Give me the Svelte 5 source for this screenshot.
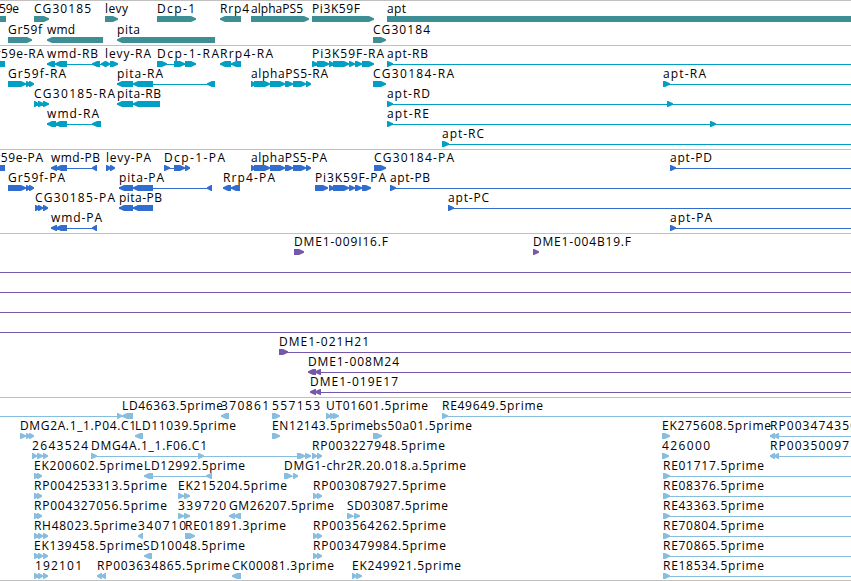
<script>
    const END = 860;

    // feature: [label, text start, text end, direction, exon edges (start, end, start, end...), intron line]
    const psi = [251, 255, 254, 270, 270, 285, 285, 293, 293, 306, 306, 311];
    const triple = [34, 39, 38, 43, 43, 48];

    const tracks = [
        {
            name: 'genes', height: 45, pitch: 21,
            rows: [
                [
                    ['Gr59e', -14, 19, '|', [-20, 6]],
                    ['CG30185', 34, 91, '>', [34, 49]],
                    ['levy', 105, 128, '>', [105, 118]],
                    ['Dcp-1', 157, 195, '>', [157, 196]],
                    ['Rrp4', 220, 249, '<', [220, 241]],
                    ['alphaPS5', 251, 303, '>', [251, 309]],
                    ['Pi3K59F', 312, 360, '>', [312, 374]],
                    ['apt', 387, 406, '|', [387, END]],
                ],
                [
                    ['Gr59f', 8, 42, '>', [8, 32]],
                    ['wmd', 47, 75, '<', [47, 103]],
                    ['pita', 117, 140, '<', [117, 215]],
                    ['CG30184', 373, 430, '>', [373, 386]],
                ],
            ],
        },
        {
            name: 'transcripts', height: 104, pitch: 20,
            rows: [
                [
                    ['Gr59e-RA', -14, 44, '|', [-20, 5]],
                    ['wmd-RB', 47, 98, '<', [47, 55, 55, 67, 92, 100, 101, 106], [47, 105]],
                    ['levy-RA', 105, 151, '>', [105, 110, 110, 118]],
                    ['Dcp-1-RA', 157, 219, '>', [157, 167, 174, 185, 185, 196], [157, 196]],
                    ['Rrp4-RA', 220, 273, '<', [220, 231, 231, 241]],
                    ['Pi3K59F-RA', 312, 384, '>', [312, 318, 317, 329, 329, 334, 333, 349, 349, 355, 355, 362, 362, 374]],
                    ['apt-RB', 387, 428, '>', [387, 393], [387, END]],
                ],
                [
                    ['Gr59f-RA', 8, 66, '>', [8, 26, 26, 30, 29, 34]],
                    ['pita-RA', 117, 163, '<', [117, 133, 133, 153, 207, 215], [117, 215]],
                    ['alphaPS5-RA', 251, 328, '>', psi],
                    ['CG30184-RA', 373, 454, '>', [373, 386]],
                    ['apt-RA', 663, 706, '>', [663, 670], [663, END]],
                ],
                [
                    ['CG30185-RA', 34, 115, '>', [34, 39, 38, 44, 43, 49]],
                    ['pita-RB', 117, 161, '<', [117, 133, 133, 160]],
                    ['apt-RD', 387, 430, '>', [387, 393, 667, 673], [387, END]],
                ],
                [
                    ['wmd-RA', 47, 99, '<', [47, 56, 55, 67, 92, 101], [47, 101]],
                    ['apt-RE', 387, 429, '>', [387, 393, 710, 716], [387, END]],
                ],
                [
                    ['apt-RC', 442, 484, '>', [442, 449], [442, END]],
                ],
            ],
        },
        {
            name: 'proteins', height: 84, pitch: 20,
            rows: [
                [
                    ['Gr59e-PA', -14, 43, '|', [-20, 5]],
                    ['wmd-PB', 51, 100, '<', [51, 57, 56, 67, 92, 97], [51, 97]],
                    ['levy-PA', 106, 151, '>', [106, 111, 110, 115]],
                    ['Dcp-1-PA', 164, 225, '>', [164, 170, 174, 185, 185, 190], [164, 190]],
                    ['alphaPS5-PA', 251, 327, '>', psi],
                    ['CG30184-PA', 374, 454, '>', [374, 386]],
                    ['apt-PD', 670, 712, '>', [670, 676], [670, END]],
                ],
                [
                    ['Gr59f-PA', 8, 65, '>', [8, 26, 26, 30, 29, 34]],
                    ['pita-PA', 119, 164, '<', [119, 133, 133, 153, 207, 212], [119, 212]],
                    ['Rrp4-PA', 223, 275, '<', [223, 231, 231, 240]],
                    ['Pi3K59F-PA', 315, 386, '>', [315, 328, 329, 334, 333, 349, 349, 355, 355, 362, 362, 371]],
                    ['apt-PB', 390, 430, '>', [390, 396], [390, END]],
                ],
                [
                    ['CG30185-PA', 35, 115, '>', [35, 40, 38, 43, 43, 48]],
                    ['pita-PB', 119, 162, '<', [119, 133, 133, 153]],
                    ['apt-PC', 448, 489, '>', [448, 454], [448, END]],
                ],
                [
                    ['wmd-PA', 51, 102, '<', [51, 57, 56, 67, 92, 97], [51, 97]],
                    ['apt-PA', 670, 712, '>', [670, 676], [670, END]],
                ],
            ],
        },
        {
            name: 'clones', height: 164, pitch: 20,
            rows: [
                [
                    ['DME1-009I16.F', 294, 388, '>', [294, 304]],
                    ['DME1-004B19.F', 533, 631, '>', [533, 539]],
                ],
                [['', 0, 0, '>', [], [0, END]]],
                [['', 0, 0, '>', [], [0, END]]],
                [['', 0, 0, '>', [], [0, END]]],
                [['', 0, 0, '>', [], [0, END]]],
                [['DME1-021H21', 279, 369, '>', [279, 288], [279, END]]],
                [['DME1-008M24', 308, 399, '<', [308, 316, 315, 321], [309, END]]],
                [['DME1-019E17', 310, 398, '<', [310, 316, 315, 321], [311, END]]],
            ],
        },
        {
            name: 'ests', height: 183, pitch: 20,
            rows: [
                [
                    ['', 0, 0, '>', [117, 122], [0, 122]],
                    ['LD46363.5prime', 122, 223, '<', [122, 133]],
                    ['370861', 221, 269, '<', [221, 229]],
                    ['557153', 272, 320, '>', [272, 280]],
                    ['UT01601.5prime', 326, 428, '>', [326, 331, 330, 335, 333, 339]],
                    ['RE49649.5prime', 442, 543, '>', [442, 448], [442, END]],
                ],
                [
                    ['DMG2A.1_1.P04.C1', 20, 136, '>', [20, 26, 26, 30, 29, 34]],
                    ['LD11039.5prime', 135, 236, '<', [135, 143]],
                    ['EN12143.5prime', 272, 373, '>', [272, 280]],
                    ['bs50a01.5prime', 373, 472, '>', [373, 382]],
                    ['EK275608.5prime', 662, 771, '>', [662, 670]],
                    ['RP003474350', 770, 857, '<', [770, 775, 774, 779], [770, END]],
                ],
                [
                    ['2643524', 32, 88, '>', [32, 37, 37, 43, 43, 48]],
                    ['DMG4A.1_1.F06.C1', 91, 207, '>', [91, 97, 198, 204, 297, 305, 305, 311], [91, 311]],
                    ['RP003227948.5prime', 312, 445, '>', [312, 317, 317, 322]],
                    ['426000', 662, 710, '>', [662, 669]],
                    ['RP00350097', 770, 849, '<', [770, 775, 774, 779], [770, END]],
                ],
                [
                    ['EK200602.5prime', 34, 143, '>', [34, 39, 37, 42]],
                    ['LD12992.5prime', 144, 245, '<', [144, 153, 206, 212], [144, 212]],
                    ['DMG1-chr2R.20.018.a.5prime', 284, 466, '>', [284, 292, 293, 298], [284, 298]],
                    ['RE01717.5prime', 663, 764, '>', [663, 670], [663, END]],
                ],
                [
                    ['RP004253313.5prime', 34, 167, '>', [34, 39, 37, 42]],
                    ['EK215204.5prime', 178, 287, '>', [178, 184, 184, 190], [178, 190]],
                    ['RP003087927.5prime', 313, 446, '>', [313, 318, 317, 322]],
                    ['RE08376.5prime', 663, 764, '>', [663, 670], [663, END]],
                ],
                [
                    ['RP004327056.5prime', 34, 167, '>', [34, 39, 37, 42]],
                    ['339720', 178, 226, '>', [178, 184, 184, 190], [178, 190]],
                    ['GM26207.5prime', 229, 334, '<', [229, 235, 234, 241]],
                    ['SD03087.5prime', 347, 448, '>', [347, 353, 354, 360], [347, 360]],
                    ['RE43363.5prime', 663, 764, '>', [663, 670], [663, END]],
                ],
                [
                    ['RH48023.5prime', 34, 137, '>', triple],
                    ['340710', 138, 186, '<', [138, 143]],
                    ['RE01891.3prime', 185, 286, '>', [185, 195]],
                    ['RP003564262.5prime', 313, 446, '>', [313, 318, 317, 322]],
                    ['RE70804.5prime', 663, 764, '>', [663, 670], [663, END]],
                ],
                [
                    ['EK139458.5prime', 34, 143, '>', triple],
                    ['SD10048.5prime', 143, 245, '<', [144, 152]],
                    ['RP003479984.5prime', 313, 446, '>', [313, 318, 317, 322]],
                    ['RE70865.5prime', 663, 764, '>', [663, 670], [663, END]],
                ],
                [
                    ['192101', 35, 82, '>', triple],
                    ['RP003634865.5prime', 97, 230, '<', [97, 102, 101, 106]],
                    ['CK00081.3prime', 232, 334, '<', [232, 241]],
                    ['EK249921.5prime', 352, 461, '>', [352, 357, 356, 362]],
                    ['RE18534.5prime', 663, 764, '>', [663, 670], [663, END]],
                ],
            ],
        },
    ];

    // all exons of a feature as one path, each ending in a pointed head
    const exonPath = (edges, dir, y) => {
        let d = '';
        for (let i = 0; i < edges.length; i += 2) {
            const a = edges[i];
            const b = edges[i + 1];
            const head = Math.min(6, b - a);
            if (dir === '>') {
                d += `M${a} ${y}H${b - head + 1}L${b} ${y + 2.3}V${y + 3.7}L${b - head + 1} ${y + 6}H${a}Z`;
            } else if (dir === '<') {
                d += `M${b} ${y}H${a + head - 1}L${a} ${y + 2.3}V${y + 3.7}L${a + head - 1} ${y + 6}H${b}Z`;
            } else {
                d += `M${a} ${y}H${b}V${y + 6}H${a}Z`;
            }
        }
        return d;
    };
</script>

<main>
    {#each tracks as track}
        <section class={track.name} style="height: {track.height}px">
            <svg width="851" height={track.height - 1}>
                {#each track.rows as row, r}
                    {#each row as [label, x, end, dir, edges, line]}
                        {#if line}
                            <rect x={line[0]} y={18 + r * track.pitch} width={line[1] - line[0]} height="1" />
                        {/if}
                        <path d={exonPath(edges, dir, 15 + r * track.pitch)} />
                        {#if label}
                            <text {x} y={12 + r * track.pitch} textLength={end - x}>{label}</text>
                        {/if}
                    {/each}
                {/each}
            </svg>
        </section>
    {/each}
</main>

<style>
    :global(body) {
        margin: 0;
        background: #fff;
    }
    main {
        width: 851px;
        height: 581px;
        box-sizing: border-box;
        overflow: hidden;
        border-bottom: 1px solid #c0c0c0;
    }
    section {
        box-sizing: border-box;
        border-top: 1px solid #c0c0c0;
    }
    svg {
        display: block;
    }
    text {
        font-family: "Open Sans", "Noto Sans", sans-serif;
        font-size: 12px;
        fill: #000;
    }
    .genes {
        fill: #3e8e95;
    }
    .transcripts {
        fill: #009fc4;
    }
    .proteins {
        fill: #316dcf;
    }
    .clones {
        fill: #7658aa;
    }
    .ests {
        fill: #87bddf;
    }
</style>
